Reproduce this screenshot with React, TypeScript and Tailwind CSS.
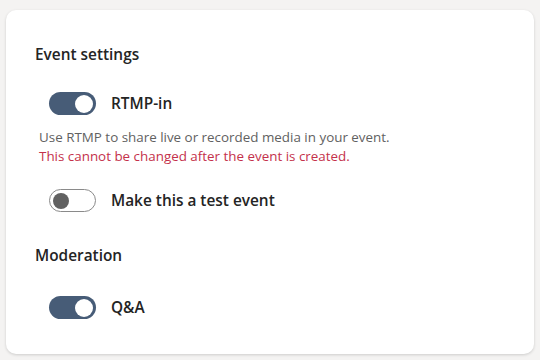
import React from 'react';

type ToggleProps = { on: boolean };

const Toggle: React.FC<ToggleProps> = ({ on }) => {
  if (on) {
    return (
      <div className="flex h-[23px] w-[47px] shrink-0 items-center justify-end rounded-full bg-[#475c77] pr-[3px]">
        <div className="h-[18px] w-[18px] rounded-full bg-white" />
      </div>
    );
  }
  return (
    <div className="flex h-[23px] w-[47px] shrink-0 items-center rounded-full border border-[#8a8a8a] bg-white pl-[3px]">
      <div className="h-[16px] w-[16px] rounded-full bg-[#616161]" />
    </div>
  );
};

const ToggleRow: React.FC<{ on: boolean; label: string; className?: string }> = ({ on, label, className }) => (
  <div className={`flex items-center gap-[15px] pl-[43px] ${className ?? ''}`}>
    <Toggle on={on} />
    <span className="text-[15.4px] font-semibold text-[#242424]">{label}</span>
  </div>
);

export default function App() {
  return (
    <div
      className="h-[360px] w-[540px] overflow-hidden bg-[#f4f3f2] px-[6px] pt-[10px]"
      style={{ fontFamily: '"Open Sans", "Noto Sans", sans-serif' }}
    >
      <div className="h-[344px] rounded-[10px] bg-white shadow-[0_1px_3px_rgba(0,0,0,0.16)]">
        <div className="pt-[33px]">
          <h2 className="pl-[29px] text-[15.4px] leading-[24px] font-semibold text-[#242424]">Event settings</h2>

          <ToggleRow on label="RTMP-in" className="mt-[25px]" />

          <div className="mt-[13px] pl-[33px] text-[13.4px] leading-[19px] text-[#616161]">
            <p>Use RTMP to share live or recorded media in your event.</p>
            <p className="text-[#c4314b]">This cannot be changed after the event is created.</p>
          </div>

          <ToggleRow on={false} label="Make this a test event" className="mt-[23px]" />

          <h2 className="mt-[32px] pl-[29px] text-[15.4px] leading-[24px] font-semibold text-[#242424]">Moderation</h2>

          <ToggleRow on label="Q&A" className="mt-[28px]" />
        </div>
      </div>
    </div>
  );
}
